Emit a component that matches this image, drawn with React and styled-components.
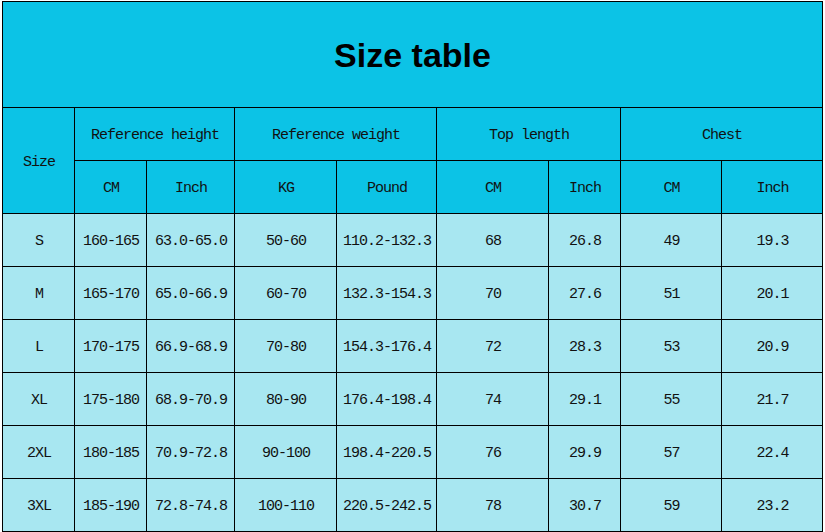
import React from 'react';
import styled, { createGlobalStyle } from 'styled-components';

const GlobalStyle = createGlobalStyle`
  html, body {
    margin: 0;
    padding: 0;
    background: #ffffff;
  }
`;

const Page = styled.div`
  padding: 1px 0 0 2px;
  width: 825px;
  height: 532px;
  box-sizing: border-box;
`;

const Table = styled.table`
  border-collapse: collapse;
  table-layout: fixed;
  width: 821px;
  font-family: "Liberation Mono", "DejaVu Sans Mono", monospace;
  font-size: 15px;
  letter-spacing: -1px;
  color: #111;
`;

const TitleCell = styled.th`
  height: 104px;
  padding: 1px 0 0;
  background: #0cc3e6;
  border: 1px solid #000;
  font-family: "Liberation Sans", Arial, sans-serif;
  font-size: 34px;
  font-weight: 700;
  letter-spacing: 0;
  color: #000;
  text-align: center;
  vertical-align: middle;
`;

const HeadCell = styled.th`
  height: 49px;
  padding: 3px 0 0 1px;
  background: #0cc3e6;
  border: 1px solid #000;
  font-weight: 400;
  text-align: center;
  vertical-align: middle;
`;

const Cell = styled.td`
  height: 49px;
  padding: 3px 0 0 1px;
  background: #a8e7f1;
  border: 1px solid #000;
  text-align: center;
  vertical-align: middle;
  white-space: nowrap;
`;

const widths = [72, 72, 88, 102, 100, 112, 72, 101, 101];

const rows = [
  ['S', '160-165', '63.0-65.0', '50-60', '110.2-132.3', '68', '26.8', '49', '19.3'],
  ['M', '165-170', '65.0-66.9', '60-70', '132.3-154.3', '70', '27.6', '51', '20.1'],
  ['L', '170-175', '66.9-68.9', '70-80', '154.3-176.4', '72', '28.3', '53', '20.9'],
  ['XL', '175-180', '68.9-70.9', '80-90', '176.4-198.4', '74', '29.1', '55', '21.7'],
  ['2XL', '180-185', '70.9-72.8', '90-100', '198.4-220.5', '76', '29.9', '57', '22.4'],
  ['3XL', '185-190', '72.8-74.8', '100-110', '220.5-242.5', '78', '30.7', '59', '23.2'],
];

export default function App() {
  return (
    <Page>
      <GlobalStyle />
      <Table>
        <colgroup>
          {widths.map((w, i) => (
            <col key={i} style={{ width: w }} />
          ))}
        </colgroup>
        <thead>
          <tr>
            <TitleCell colSpan={9}>Size table</TitleCell>
          </tr>
          <tr>
            <HeadCell rowSpan={2}>Size</HeadCell>
            <HeadCell colSpan={2}>Reference height</HeadCell>
            <HeadCell colSpan={2}>Reference weight</HeadCell>
            <HeadCell colSpan={2}>Top length</HeadCell>
            <HeadCell colSpan={2}>Chest</HeadCell>
          </tr>
          <tr>
            <HeadCell>CM</HeadCell>
            <HeadCell>Inch</HeadCell>
            <HeadCell>KG</HeadCell>
            <HeadCell>Pound</HeadCell>
            <HeadCell>CM</HeadCell>
            <HeadCell>Inch</HeadCell>
            <HeadCell>CM</HeadCell>
            <HeadCell>Inch</HeadCell>
          </tr>
        </thead>
        <tbody>
          {rows.map((r) => (
            <tr key={r[0]}>
              {r.map((v, i) => (
                <Cell key={i}>{v}</Cell>
              ))}
            </tr>
          ))}
        </tbody>
      </Table>
    </Page>
  );
}
